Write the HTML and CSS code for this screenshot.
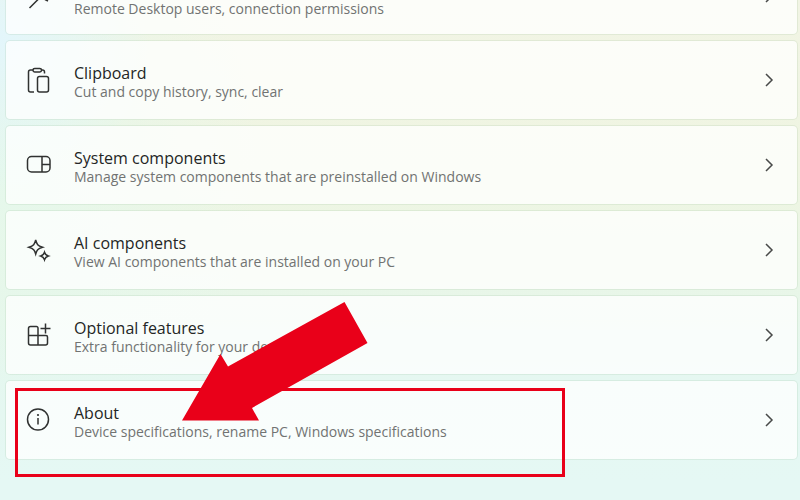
FILE: index.html
```html
<!DOCTYPE html>
<html lang="en">
<head>
<meta charset="utf-8">
<title>System settings</title>
<link rel="stylesheet" href="styles.css">
</head>
<body>
<main>
<ul class="settings">
  <li class="item">
    <a class="card card-cut" href="#remote-desktop">
      <svg class="icon" viewBox="0 0 28 28"><path d="M5.500 24L16 13.500M21 15.500L24 17"/></svg>
      <span class="text"><span class="detail">Remote Desktop users, connection permissions</span></span>
      <svg class="chevron" viewBox="0 0 10 16"><path d="M2 2L8 8L2 14"/></svg>
    </a>
  </li>
  <li class="item">
    <a class="card" href="#clipboard">
      <svg class="icon" viewBox="0 0 28 28"><path d="M10 26H6.500A2 2 0 0 1 4.500 24V6A2 2 0 0 1 6.500 4H9M17.500 4H18.500A2 2 0 0 1 20.500 6V7.500"/><rect x="9" y="2.500" width="8.500" height="3.500" rx="1.700"/><rect x="13.500" y="10.500" width="11" height="15.500" rx="2"/></svg>
      <span class="text"><span class="title">Clipboard</span><span class="detail">Cut and copy history, sync, clear</span></span>
      <svg class="chevron" viewBox="0 0 10 16"><path d="M2 2L8 8L2 14"/></svg>
    </a>
  </li>
  <li class="item">
    <a class="card" href="#system-components">
      <svg class="icon" viewBox="0 0 28 28"><rect x="3.500" y="5.500" width="22.500" height="15.500" rx="4"/><path d="M18 5.500V21M18 13.500H26"/></svg>
      <span class="text"><span class="title">System components</span><span class="detail">Manage system components that are preinstalled on Windows</span></span>
      <svg class="chevron" viewBox="0 0 10 16"><path d="M2 2L8 8L2 14"/></svg>
    </a>
  </li>
  <li class="item">
    <a class="card" href="#ai-components">
      <svg class="icon" viewBox="0 0 28 28"><path d="M11.700 4C12.800 8.300 13.700 9.800 18.500 11.300C13.700 12.800 12.800 14.300 11.700 18C10.600 14.300 9.700 12.800 4.900 11.300C9.700 9.800 10.600 8.300 11.700 4ZM20.500 16.200C21.300 18.700 21.900 19.300 24.300 20C21.900 20.800 21.300 21.400 20.500 23.800C19.700 21.400 19.100 20.800 16.700 20C19.100 19.300 19.700 18.700 20.500 16.200Z"/></svg>
      <span class="text"><span class="title">AI components</span><span class="detail">View AI components that are installed on your PC</span></span>
      <svg class="chevron" viewBox="0 0 10 16"><path d="M2 2L8 8L2 14"/></svg>
    </a>
  </li>
  <li class="item">
    <a class="card" href="#optional-features">
      <svg class="icon" viewBox="0 0 28 28"><path d="M14 14.500V7A1.500 1.500 0 0 0 12.500 5.500H6.500A2 2 0 0 0 4.500 7.500V22A2 2 0 0 0 6.500 24H21.500A2 2 0 0 0 23.500 22V16A1.500 1.500 0 0 0 22 14.500H4.500M14 14.500V24M21.500 2.500V12.500M16.500 7.500H26.500"/></svg>
      <span class="text"><span class="title">Optional features</span><span class="detail">Extra functionality for your device</span></span>
      <svg class="chevron" viewBox="0 0 10 16"><path d="M2 2L8 8L2 14"/></svg>
    </a>
  </li>
  <li class="item">
    <a class="card" href="#about">
      <svg class="icon" viewBox="0 0 28 28"><circle cx="14" cy="13.500" r="10.500"/><path d="M14 12V18.500"/><circle class="dot" cx="14" cy="9" r="1.100"/></svg>
      <span class="text"><span class="title">About</span><span class="detail">Device specifications, rename PC, Windows specifications</span></span>
      <svg class="chevron" viewBox="0 0 10 16"><path d="M2 2L8 8L2 14"/></svg>
    </a>
    <span class="highlight"></span>
    <svg class="arrow" viewBox="0 0 186 119"><path d="M0 118.500L38.500 52L46 64.500L162.500 0L185.500 41L70 106L77 118.500Z"/></svg>
  </li>
</ul>
</main>
</body>
</html>
```
FILE: styles.css
```css
* {
  box-sizing: border-box;
}

body {
  margin: 0;
  min-height: 100vh;
  font-family: "Segoe UI", "Open Sans", "Noto Sans", sans-serif;
  background:
    radial-gradient(circle at 0 40px, #e3f6fb 0, rgba(227, 246, 251, 0) 150px),
    radial-gradient(ellipse 260px 300px at 0 170px, #e5f8ec 0, rgba(229, 248, 236, 0) 100%),
    linear-gradient(#f1f4e4 0, #eff5e2 170px, #e9f6e6 270px, #e5f7f1 380px, #e5f8f4 480px);
  background-repeat: no-repeat;
  overflow: hidden;
}

.settings {
  display: flex;
  flex-direction: column;
  gap: 5px;
  margin: 0;
  padding: 0 2px 0 5px;
  list-style: none;
}

.item {
  position: relative;
}

.card {
  display: flex;
  align-items: center;
  height: 80px;
  padding: 0 23px 0 18px;
  border: 1px solid rgba(130, 170, 130, 0.14);
  border-radius: 5px;
  background: rgba(255, 255, 255, 0.76);
  background-clip: padding-box;
  color: #242625;
  text-decoration: none;
}

.card-cut {
  align-items: flex-start;
  height: 35px;
  border-top: 0;
  border-radius: 0 0 5px 5px;
}

.card-cut .icon {
  margin-top: -16px;
}

.card-cut .chevron {
  margin-top: -12px;
}

.icon {
  flex: none;
  width: 28px;
  height: 28px;
  fill: none;
  stroke: #303231;
  stroke-width: 1.5px;
}

.icon .dot {
  fill: #303231;
  stroke: none;
}

.text {
  display: flex;
  flex: 1;
  flex-direction: column;
  margin-left: 22px;
  padding-top: 4px;
}

.card-cut .text {
  padding-top: 0;
}

.title {
  font-size: 16px;
  line-height: 20px;
}

.detail {
  font-size: 14px;
  line-height: 18px;
  color: #717372;
}

.chevron {
  flex: none;
  width: 10px;
  height: 16px;
  fill: none;
  stroke: #484a49;
  stroke-width: 1.5px;
}

.highlight {
  position: absolute;
  top: 8px;
  left: 10px;
  width: 550px;
  height: 89px;
  border: 3px solid #e90019;
}

.arrow {
  position: absolute;
  top: -78px;
  left: 177px;
  width: 186px;
  height: 119px;
  fill: #e90019;
}
```
